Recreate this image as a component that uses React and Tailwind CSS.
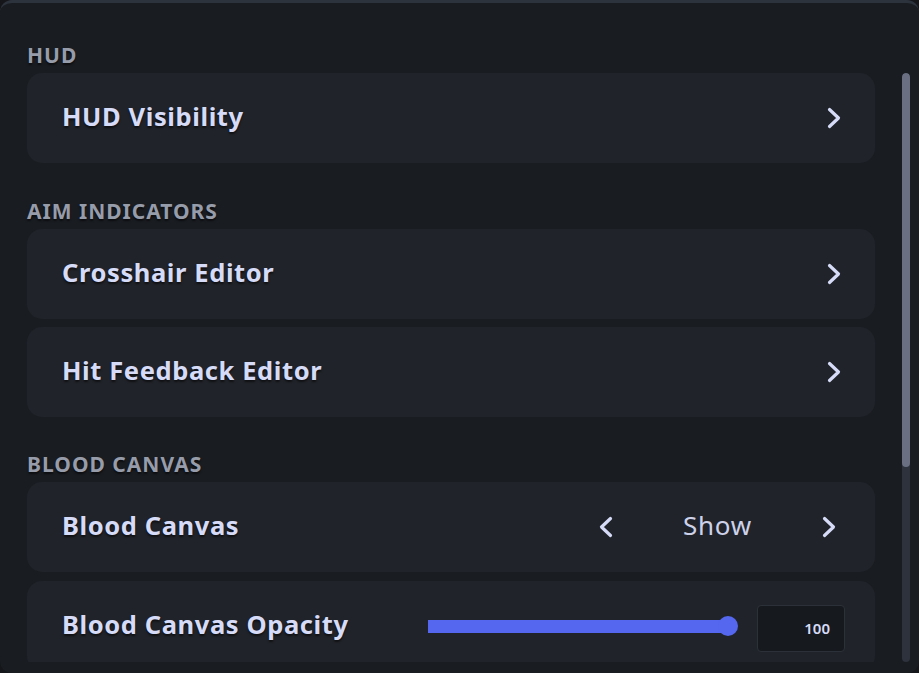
import { useState } from 'react'

// Settings pane: HUD / aim indicator / blood canvas options, one card per row.
const shadow = '[text-shadow:0_2px_2px_rgba(0,0,0,0.55)]'

function Chevron({ dir = 'right' }) {
  return (
    <svg width="14" height="24" viewBox="0 0 14 24" className="shrink-0">
      <polyline
        points={dir === 'right' ? '2.5,3.5 11.5,12 2.5,20.5' : '11.5,3.5 2.5,12 11.5,20.5'}
        fill="none"
        stroke="#d6dbf7"
        strokeWidth="3.2"
        strokeLinecap="round"
        strokeLinejoin="round"
      />
    </svg>
  )
}

function Header({ children, className = '' }) {
  return (
    <div
      className={`mb-[6px] h-[24px] text-[21px] font-bold leading-[24px] tracking-[1px] text-[#979caa] ${shadow} ${className}`}
    >
      {children}
    </div>
  )
}

function Card({ children, className = 'pr-[34px]' }) {
  return (
    <div className={`flex h-[90px] shrink-0 items-center rounded-[15px] bg-[#202329] pl-[35px] ${className}`}>
      {children}
    </div>
  )
}

function Label({ children }) {
  return (
    <span className={`mb-[3px] text-[25.5px] font-bold tracking-[0.6px] text-[#d6dbf7] ${shadow}`}>
      {children}
    </span>
  )
}

function LinkRow({ label }) {
  return (
    <Card>
      <Label>{label}</Label>
      <div className="ml-auto">
        <Chevron />
      </div>
    </Card>
  )
}

export default function App() {
  const [opacity] = useState(100)

  return (
    <div className="h-[673px] w-[919px] bg-[#14161a] font-['Noto_Sans',sans-serif]">
      <div className="flex h-[673px] overflow-hidden rounded-[12px] border-t-[3px] border-[#2d333d] bg-[#191c21] pb-[11px]">
        {/* content */}
        <div className="flex h-full flex-1 flex-col overflow-hidden px-[27px] pt-[40px]">
          <Header>HUD</Header>
          <LinkRow label="HUD Visibility" />

          <Header className="mt-[36px]">AIM INDICATORS</Header>
          <div className="flex flex-col gap-[8px]">
            <LinkRow label="Crosshair Editor" />
            <LinkRow label="Hit Feedback Editor" />
          </div>

          <Header className="mt-[35px]">BLOOD CANVAS</Header>
          <div className="flex flex-col gap-[9px]">
            <Card className="pr-[39px]">
              <Label>Blood Canvas</Label>
              <div className="ml-auto flex items-center">
                <Chevron dir="left" />
                <span className="mb-[3px] w-[209px] text-center text-[26px] tracking-[0.8px] text-[#cdd2ea]">
                  Show
                </span>
                <Chevron />
              </div>
            </Card>
            <Card className="pr-[30px]">
              <Label>Blood Canvas Opacity</Label>
              <div className="ml-auto flex items-center">
                <div className="relative h-[13px] w-[300px] bg-[#5467ee]">
                  <div
                    className="absolute top-1/2 h-[20px] w-[20px] -translate-x-1/2 -translate-y-1/2 rounded-full bg-[#5467ee]"
                    style={{ left: `${opacity}%` }}
                  />
                </div>
                <div className="ml-[29px] mt-[4px] flex h-[47px] w-[88px] items-center justify-end rounded-[4px] border border-[#2c3139] bg-[#161a1f] pr-[14px] text-[15px] font-semibold text-[#d6dbf7]">
                  {opacity}
                </div>
              </div>
            </Card>
          </div>
        </div>
        {/* scrollbar */}
        <div className="mr-[9px] mt-[70px] flex w-[8px] flex-col overflow-hidden rounded-full bg-[#2d323c]">
          <div className="h-[394px] rounded-full bg-[#6a7082]" />
        </div>
      </div>
    </div>
  )
}
